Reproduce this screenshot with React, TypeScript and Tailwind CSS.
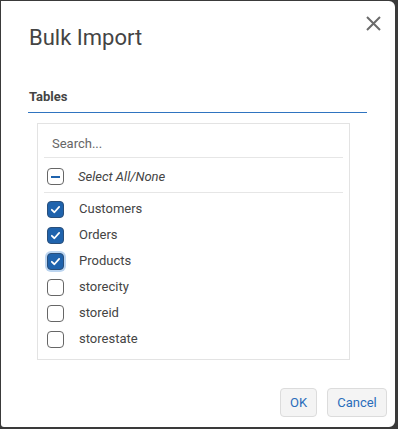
import React from "react";

const items = [
  { label: "Customers", checked: true },
  { label: "Orders", checked: true },
  { label: "Products", checked: true, focus: true },
  { label: "storecity", checked: false },
  { label: "storeid", checked: false },
  { label: "storestate", checked: false },
];

function Box({ checked, focus }: { checked: boolean; focus?: boolean }) {
  if (checked) {
    return (
      <span
        className={
          "flex h-[17px] w-[17px] items-center justify-center rounded-[4px] border border-[#2a4f7a] bg-[#1f63ad] " +
          (focus ? "shadow-[0_0_0_2px_#bcd5f0]" : "")
        }
      >
        <svg width="11" height="11" viewBox="0 0 12 12">
          <path d="M2 6.3 L4.8 9 L10 3.2" stroke="white" strokeWidth="1.9" fill="none" strokeLinecap="round" strokeLinejoin="round" />
        </svg>
      </span>
    );
  }
  return <span className="block h-[17px] w-[17px] rounded-[4px] border border-[#666] bg-white" />;
}

export default function App() {
  return (
    <div className="h-[429px] w-[398px] bg-[#3a3a3a] pl-px pt-px pr-[3px] pb-[2px]" style={{ fontFamily: "Roboto, 'Liberation Sans', sans-serif" }}>
      <div className="relative flex h-full w-full flex-col rounded-r-[6px] rounded-bl-[3px] bg-white">
        <button className="absolute right-[13px] top-[13px] flex h-[18px] w-[18px] items-center justify-center">
          <svg width="17" height="17" viewBox="0 0 17 17">
            <path d="M2 2 L15 15 M15 2 L2 15" stroke="#6b6b6b" strokeWidth="2" />
          </svg>
        </button>
        <div className="pl-[28px] pt-[23px] text-[22px] leading-[28px] text-[#444]">Bulk Import</div>
        <div className="ml-[27px] mr-[28px] mt-[37px] border-b border-[#2f74c0] pb-[7px] pl-px text-[13px] font-bold leading-[16px] text-[#444]">
          Tables
        </div>
        <div className="ml-[36px] mt-[10px] h-[237px] w-[313px] border border-[#e3e3e3] px-[6px]">
          <div className="h-[34px] border-b border-[#e6e6e6] pl-[8px] pt-[12px] text-[13px] leading-[16px] text-[#666]">Search...</div>
          <div className="flex h-[35px] items-center border-b border-[#e6e6e6] pl-[3px] pt-[3px]">
            <span className="flex h-[17px] w-[17px] items-center justify-center rounded-[4px] border border-[#666]">
              <span className="block h-[2px] w-[9px] bg-[#1f63ad]" />
            </span>
            <span className="ml-[14px] text-[13px] italic text-[#444]">Select All/None</span>
          </div>
          <div className="pt-[3px]">
            {items.map((it) => (
              <div key={it.label} className="flex h-[26px] items-center pl-[3px]">
                <Box checked={it.checked} focus={it.focus} />
                <span className="ml-[15px] text-[13px] text-[#444]">{it.label}</span>
              </div>
            ))}
          </div>
        </div>
        <div className="mt-auto flex justify-end gap-[10px] pb-[10px] pr-[8px]">
          <button className="h-[29px] w-[37px] rounded-[4px] border border-[#dcdcdc] bg-[#f4f4f4] text-[13px] text-[#2a6dbb]">OK</button>
          <button className="h-[29px] w-[60px] rounded-[4px] border border-[#dcdcdc] bg-[#f4f4f4] text-[13px] text-[#2a6dbb]">Cancel</button>
        </div>
      </div>
    </div>
  );
}
